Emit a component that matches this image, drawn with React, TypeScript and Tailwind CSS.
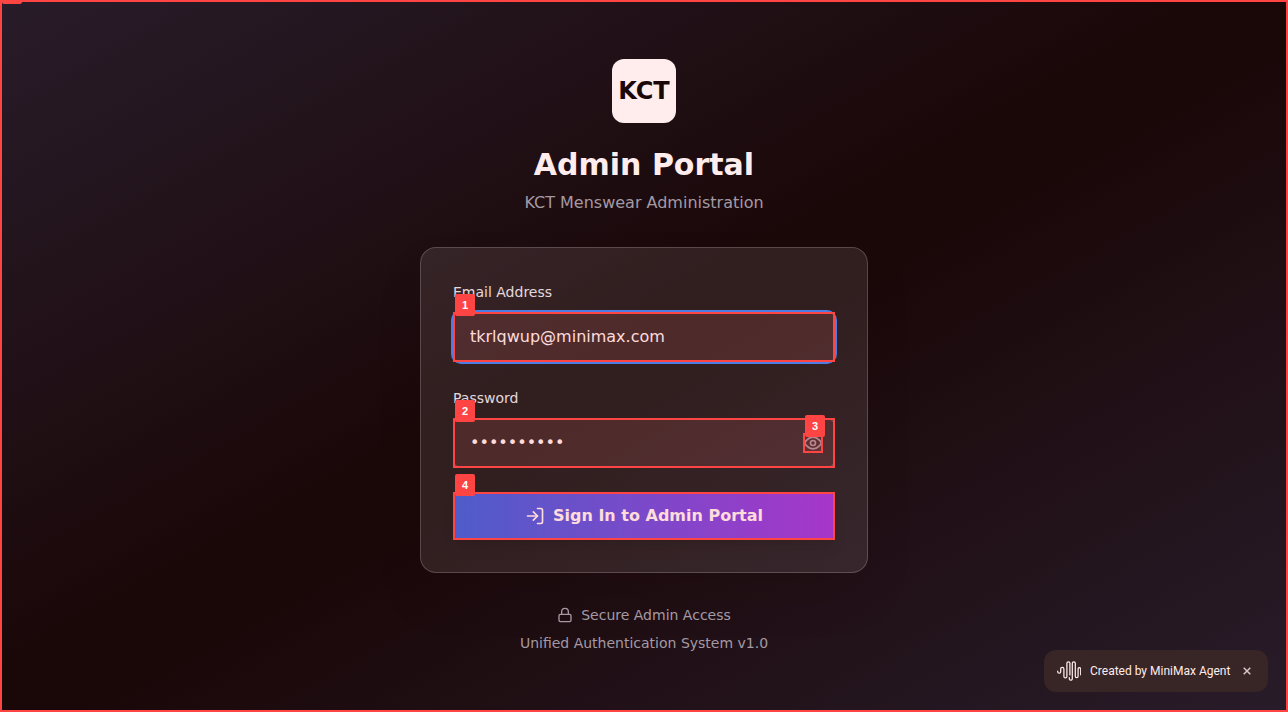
import React from "react";

function Marker({ label }: { label: string }) {
  return (
    <span className="pointer-events-none absolute inset-0 z-20 border-2 border-[#ff4444] bg-[#ff4444]/10">
      <span className="absolute -top-5 left-0 flex h-[22px] w-5 items-center justify-center rounded-[2px] bg-[#ff4444] font-['Liberation_Sans',sans-serif] text-[11px] font-bold leading-none text-white">
        {label}
      </span>
    </span>
  );
}

function EyeIcon() {
  return (
    <svg className="size-5" viewBox="0 0 24 24" fill="none" stroke="currentColor" strokeWidth="2" strokeLinecap="round" strokeLinejoin="round">
      <path d="M2 12s3-7 10-7 10 7 10 7-3 7-10 7-10-7-10-7Z" />
      <circle cx="12" cy="12" r="3" />
    </svg>
  );
}

function LogInIcon() {
  return (
    <svg className="size-5" viewBox="0 0 24 24" fill="none" stroke="currentColor" strokeWidth="2" strokeLinecap="round" strokeLinejoin="round">
      <path d="M15 3h4a2 2 0 0 1 2 2v14a2 2 0 0 1-2 2h-4" />
      <polyline points="10 17 15 12 10 7" />
      <line x1="15" x2="3" y1="12" y2="12" />
    </svg>
  );
}

function LockIcon() {
  return (
    <svg className="size-4" viewBox="0 0 24 24" fill="none" stroke="currentColor" strokeWidth="2" strokeLinecap="round" strokeLinejoin="round">
      <rect width="18" height="11" x="3" y="11" rx="2" ry="2" />
      <path d="M7 11V7a5 5 0 0 1 10 0v4" />
    </svg>
  );
}

function WaveLogo() {
  return (
    <svg className="h-5 w-6 shrink-0" viewBox="0 0 24 20" fill="none" stroke="white" strokeWidth="1.25" strokeLinecap="round" strokeLinejoin="round">
      <path d="M.7 10.2v.5a1.5 1.5 0 0 0 3 0V8a1.6 1.6 0 0 1 3.2 0v7.4a1.5 1.5 0 0 0 3 0V2.3a1.5 1.5 0 0 1 3 0v11.6" />
      <path d="M12.3 16.7v1a1.5 1.5 0 0 0 3 0V2.3a1.5 1.5 0 0 1 3 0v12.9a1.4 1.4 0 0 0 2.8 0V7.5a1.4 1.4 0 0 1 2.6 0v6.3" />
    </svg>
  );
}

export default function App() {
  return (
    <div className="relative flex h-screen w-full items-center justify-center overflow-hidden bg-[linear-gradient(to_bottom_right,#111827,#000000,#111827)] font-['DejaVu_Sans',sans-serif]">
      <main className="w-full max-w-md">
        <header className="mb-8 text-center">
          <div className="mx-auto mb-6 flex size-16 items-center justify-center rounded-xl bg-white">
            <span className="text-2xl font-bold text-black">KCT</span>
          </div>
          <h1 className="mb-2 text-3xl font-bold text-white">Admin Portal</h1>
          <p className="text-base text-[#9ca3af]">KCT Menswear Administration</p>
        </header>

        <form
          className="flex flex-col gap-6 rounded-2xl border border-white/20 bg-white/10 p-8 shadow-2xl"
          onSubmit={(e) => e.preventDefault()}
        >
          <div className="flex flex-col gap-2">
            <label htmlFor="email" className="h-6 text-sm leading-6 text-[#e5e7eb]">
              Email Address
            </label>
            <div className="relative h-[50px]">
              <input
                id="email"
                type="email"
                defaultValue="tkrlqwup@minimax.com"
                className="h-full w-full rounded-lg border border-transparent bg-white/5 px-4 pt-[11px] pb-[13px] text-base text-white ring-2 ring-[#3b82f6] outline-none"
              />
              <Marker label="1" />
            </div>
          </div>

          <div className="flex flex-col gap-2">
            <label htmlFor="password" className="h-6 text-sm leading-6 text-[#e5e7eb]">
              Password
            </label>
            <div className="relative h-[50px]">
              <input
                id="password"
                type="password"
                defaultValue="abcdefghij"
                className="h-full w-full rounded-lg border border-white/20 bg-white/5 px-4 pt-[11px] pr-12 pb-[13px] text-base text-white outline-none"
              />
              <Marker label="2" />
              <button type="button" aria-label="Show password" className="absolute top-[15px] right-3 size-5 text-[#9ca3af]">
                <EyeIcon />
                <Marker label="3" />
              </button>
            </div>
          </div>

          <button
            type="submit"
            className="relative flex h-12 items-center justify-center gap-2 rounded-lg bg-[linear-gradient(to_right,#2563eb,#9333ea)] text-base font-semibold text-white shadow-lg"
          >
            <LogInIcon />
            <span>Sign In to Admin Portal</span>
            <Marker label="4" />
          </button>
        </form>

        <footer className="mt-8 text-center text-sm text-[#9ca3af]">
          <div className="flex items-center justify-center gap-2">
            <LockIcon />
            <span>Secure Admin Access</span>
          </div>
          <p className="mt-2">Unified Authentication System v1.0</p>
        </footer>
      </main>

      <aside className="absolute right-5 bottom-5 flex h-[42px] w-56 items-center rounded-xl bg-[#222222] pl-[13px] font-['Roboto',sans-serif] text-xs font-normal text-white">
        <WaveLogo />
        <span className="ml-[9px] w-[140px] whitespace-nowrap">Created by MiniMax Agent</span>
        <svg className="ml-[13px] size-2" viewBox="0 0 8 8" stroke="#d1d5db" strokeWidth="1.5" fill="none">
          <path d="M.7.7l6.6 6.6M7.3.7L.7 7.3" />
        </svg>
      </aside>

      <div className="pointer-events-none absolute inset-0 z-10 border-2 border-[#ff4444] bg-[#ff4444]/10">
        <span className="absolute -top-5 left-0 h-[22px] w-5 rounded-[2px] bg-[#ff4444]" />
      </div>
    </div>
  );
}
